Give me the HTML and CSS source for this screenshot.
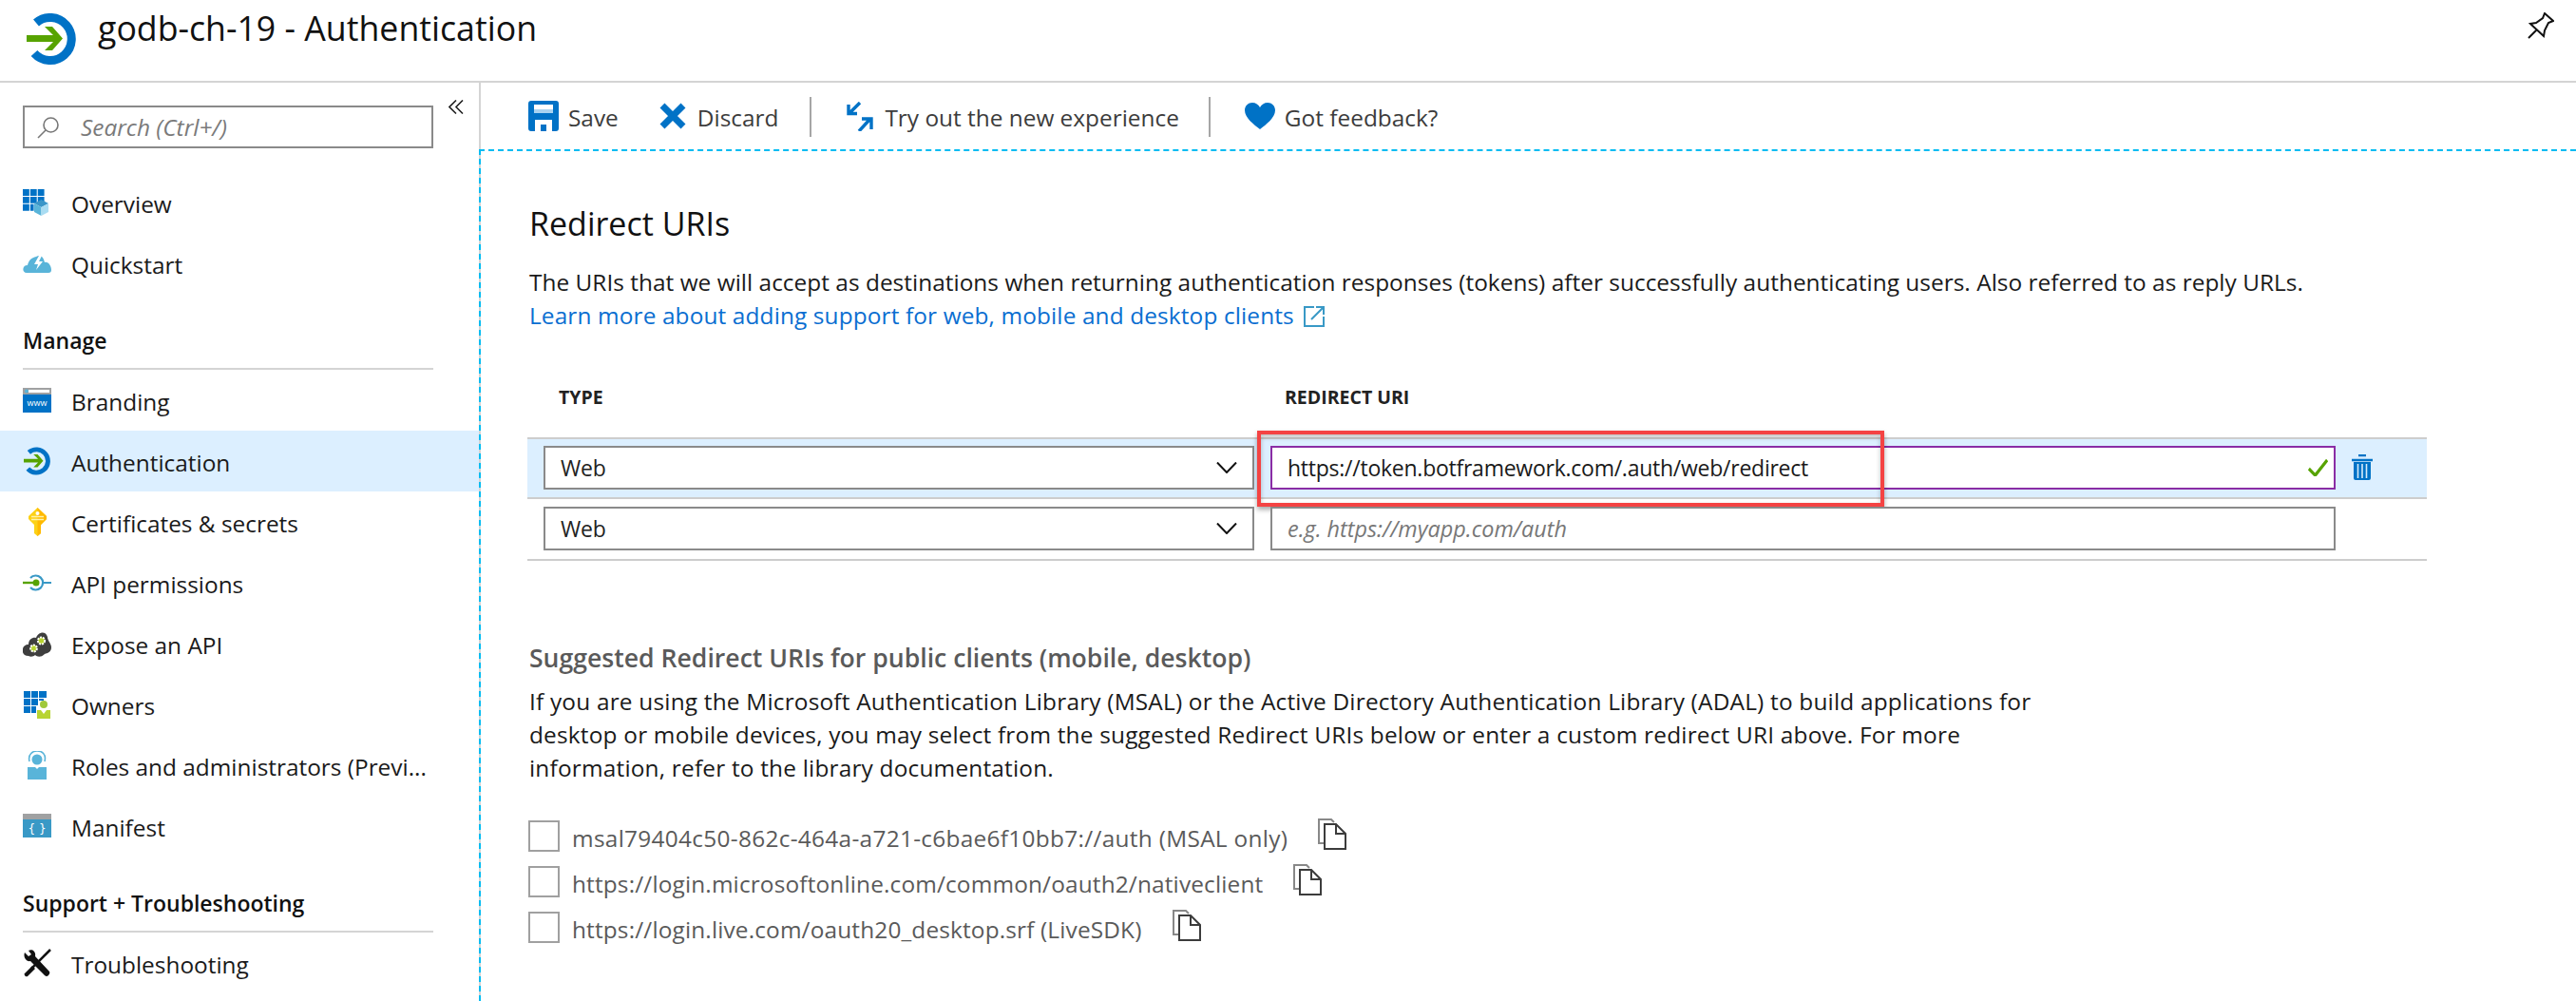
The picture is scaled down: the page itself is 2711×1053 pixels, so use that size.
FILE: index.html
```html
<!DOCTYPE html>
<html lang="en">
<head>
    <meta charset="UTF-8">
    <title>godb-ch-19 - Authentication</title>
    <link rel="stylesheet" href="styles.css">
</head>
<body>
    <svg class="defs" width="0" height="0">
        <symbol id="auth-logo" viewBox="0 0 52 54">
            <path d="M10 10 A22.5 22.5 0 1 1 8 42" fill="none" stroke="#0072c6" stroke-width="9"/>
            <path d="M19 14 H27 L38 26.5 L27 39 H19 L28 30 H0 V23 H28 Z" fill="#57a300"/>
        </symbol>
        <symbol id="copy" viewBox="0 0 30 33">
            <path d="M6 26 H1 V1 H14 L17 4" fill="none" stroke="#888" stroke-width="2"/>
            <path d="M7 6 H19 L29 16 V32 H7 Z M19 6 V16 H29" fill="#fff" stroke="#3c3c3c" stroke-width="2"/>
        </symbol>
        <symbol id="chev" viewBox="0 0 22 12">
            <path d="M1 0.5 L11 11 L21 0.5" fill="none" stroke="#111" stroke-width="2"/>
        </symbol>
    </svg>

    <header class="blade-header">
        <svg class="logo" width="52" height="54"><use href="#auth-logo"/></svg>
        <h1>godb-ch-19 - Authentication</h1>
        <svg class="pin" width="28" height="28" viewBox="0 0 28 28">
            <path d="M1 27 L10 18 M18 1 L27 9 L22 11 L18 19 L17 25 L3 12 L9 11 L16 6 Z M3 12 L17 25" fill="none" stroke="#111" stroke-width="2"/>
        </svg>
    </header>

    <div class="blade-body">
        <aside class="sidebar">
            <div class="search-row">
                <div class="search">
                    <svg width="24" height="24" viewBox="0 0 24 24">
                        <circle cx="14.5" cy="9.5" r="7.5" fill="none" stroke="#777" stroke-width="1.6"/>
                        <path d="M9 15 L1 23" stroke="#777" stroke-width="1.6"/>
                    </svg>
                    <span>Search (Ctrl+/)</span>
                </div>
                <svg class="collapse" width="16" height="15" viewBox="0 0 16 15">
                    <path d="M8 0.5 L1 7.5 L8 14.5 M15 0.5 L8 7.5 L15 14.5" fill="none" stroke="#222" stroke-width="1.6"/>
                </svg>
            </div>

            <nav class="nav-first">
                <a class="nav-item">
                    <svg width="30" height="30" viewBox="0 0 30 30">
                        <path d="M0 1h6.5v6.5H0zM7.5 1H14v6.5H7.5zM15 1h6.5v6.5H15zM0 8.5h6.5V15H0zM7.5 8.5H14V15H7.5zM15 8.5h6.5V15H15zM0 16h6.5v6.5H0zM7.5 16H11v6.5H7.5z" fill="#0072c6" transform="translate(0 0) scale(1.05)"/>
                        <path d="M12 16 L19.5 12 L27 16 L19.5 20 Z" fill="#3a96c8"/>
                        <path d="M12 16 L19.5 20 V29 L12 25 Z" fill="#59b4d9"/>
                        <path d="M27 16 L19.5 20 V29 L27 25 Z" fill="#a9dcf2"/>
                    </svg>
                    <span>Overview</span>
                </a>
                <a class="nav-item">
                    <svg width="30" height="30" viewBox="0 0 30 30">
                        <path d="M4 25 C-1 25 -1 17 5 17 C6 12 9 9 14 8 C19 5 22 9 23 14 C27 13 30 18 30 22 C30 24 29 25 27 25 Z" fill="#59b4d9"/>
                        <path d="M17 7 L12 16 H16 L14 22 L21 13 H17 L20 7 Z" fill="#fff"/>
                    </svg>
                    <span>Quickstart</span>
                </a>
            </nav>

            <h2 class="nav-heading">Manage</h2>
            <nav>
                <a class="nav-item">
                    <svg width="30" height="30" viewBox="0 0 30 30">
                        <rect y="2" width="30" height="26" fill="#0072c6"/>
                        <rect y="2" width="30" height="7" fill="#a0a1a2"/>
                        <rect x="6" y="4" width="22" height="3" fill="#fff"/>
                        <circle cx="4" cy="5.5" r="2" fill="#59b4d9"/>
                        <text x="15" y="21" class="www">www</text>
                    </svg>
                    <span>Branding</span>
                </a>
                <a class="nav-item active">
                    <svg width="30" height="30" viewBox="0 0 30 30"><use href="#auth-logo" x="1" y="0" width="28" height="30"/></svg>
                    <span>Authentication</span>
                </a>
                <a class="nav-item">
                    <svg width="30" height="30" viewBox="0 0 30 30">
                        <path d="M15.5 0 L25 9 V12 L19 18 V27 L15.5 30 L12 27 V18 L6 12 V9 Z" fill="#fcd116"/>
                        <path d="M15.5 0 L25 9 V12 L19 18 V27 L15.5 30 Z" fill="#ffb900"/>
                        <circle cx="15.5" cy="6" r="2" fill="#fff"/>
                        <path d="M9 9.5h13M9 12.5h13" stroke="#fff3a8" stroke-width="1.5"/>
                    </svg>
                    <span>Certificates &amp; secrets</span>
                </a>
                <a class="nav-item">
                    <svg width="30" height="30" viewBox="0 0 30 30">
                        <path d="M8 10 A7.5 7.5 0 1 1 8 20 M22 15 H30" fill="none" stroke="#3999c6" stroke-width="2.2"/>
                        <path d="M0 15 H14" stroke="#57a300" stroke-width="2.4"/>
                        <circle cx="14" cy="15" r="3.5" fill="#57a300"/>
                    </svg>
                    <span>API permissions</span>
                </a>
                <a class="nav-item">
                    <svg width="30" height="30" viewBox="0 0 30 30">
                        <path d="M6 28 C1 28 -1 24 0 21 C0 18 3 16 6 16 C6 10 11 8 14 9 C16 3 24 1 26 8 C26 12 30 15 30 19 C30 24 26 25 23 26 C19 30 15 29 13 27 C11 29 8 29 6 28 Z" fill="#3e3e3e"/>
                        <circle cx="19.5" cy="12" r="3.6" fill="#b8d432" stroke="#fff" stroke-width="2" stroke-dasharray="2 1"/>
                        <circle cx="11.5" cy="20" r="3.4" fill="#b8d432" stroke="#fff" stroke-width="2" stroke-dasharray="2 1"/>
                    </svg>
                    <span>Expose an API</span>
                </a>
                <a class="nav-item">
                    <svg width="30" height="30" viewBox="0 0 30 30">
                        <path d="M1 1h7v7H1zM9 1h7v7H9zM17 1h8v7h-8zM1 9h7v7H1zM9 9h7v7H9zM17 9h5v2h-5zM1 17h7v7H1zM9 17h5v7H9z" fill="#0072c6"/>
                        <circle cx="22" cy="15" r="4" fill="#9fc93c"/>
                        <path d="M15 21 H29 V30 H15 Z" fill="#b8d432"/>
                        <path d="M19 21 L22 25 L25 21 Z" fill="#fff"/>
                    </svg>
                    <span>Owners</span>
                </a>
                <a class="nav-item">
                    <svg width="30" height="30" viewBox="0 0 30 30">
                        <path d="M7 17 H13 L15 19 L17 17 H25 V30 H5 V17 Z" fill="#59b4d9"/>
                        <circle cx="15" cy="9" r="5.5" fill="#59b4d9"/>
                        <path d="M7 11 C5 3 11 0 15 0 C20 0 25 3 23 11" fill="none" stroke="#59b4d9" stroke-width="1.6"/>
                    </svg>
                    <span>Roles and administrators (Previ...</span>
                </a>
                <a class="nav-item">
                    <svg width="30" height="30" viewBox="0 0 30 30">
                        <rect y="2" width="30" height="25" fill="#3999c6"/>
                        <rect y="2" width="30" height="6" fill="#a0a1a2"/>
                        <text x="15" y="22" class="braces">{ }</text>
                    </svg>
                    <span>Manifest</span>
                </a>
            </nav>

            <h2 class="nav-heading">Support + Troubleshooting</h2>
            <nav>
                <a class="nav-item">
                    <svg width="30" height="30" viewBox="0 0 30 30">
                        <path d="M29 1 L9 21" stroke="#111" stroke-width="2.5"/>
                        <path d="M10 18 L13 21 L5 29 Q3 30 2 28 Q1 26 2 26 Z" fill="#111"/>
                        <path d="M2 4 L6 8 L9 6 L6 2 C10 0 14 3 13 8 L28 24 Q29 26 27 28 Q25 30 23 28 L8 13 C4 14 0 9 2 4 Z" fill="#111"/>
                    </svg>
                    <span>Troubleshooting</span>
                </a>
            </nav>
        </aside>

        <main class="main">
            <div class="toolbar">
                <a class="tool tool-save">
                    <svg width="32" height="32" viewBox="0 0 32 32">
                        <path fill-rule="evenodd" d="M3 0 H29 Q32 0 32 3 V29 Q32 32 29 32 H3 Q0 32 0 29 V3 Q0 0 3 0 Z M6 4 V13 H26 V4 Z M7 20 V32 H25 V20 Z" fill="#0072c6"/>
                        <rect x="7" y="20" width="18" height="12" fill="#fff"/>
                        <rect x="13" y="25" width="6" height="7" fill="#0072c6"/>
                        <rect x="6" y="9" width="20" height="4" fill="#a9d3f0"/>
                    </svg>
                    <span>Save</span>
                </a>
                <a class="tool tool-discard">
                    <svg width="28" height="28" viewBox="0 0 28 28">
                        <path d="M3 3 L25 25 M25 3 L3 25" stroke="#0072c6" stroke-width="7"/>
                    </svg>
                    <span>Discard</span>
                </a>
                <i class="sep"></i>
                <a class="tool">
                    <svg width="28" height="31" viewBox="0 0 28 31">
                        <path d="M13 1 L3 11 M1 3 V12.5 H10" fill="none" stroke="#0072c6" stroke-width="3.4" transform="translate(1 0)"/>
                        <path d="M14 31 L25 19 M27 29 V18 H17" fill="none" stroke="#0072c6" stroke-width="3.4" transform="translate(-1 0)"/>
                    </svg>
                    <span>Try out the new experience</span>
                </a>
                <i class="sep sep-last"></i>
                <a class="tool tool-feedback">
                    <svg width="32" height="28" viewBox="0 0 33 28" preserveAspectRatio="none">
                        <path d="M16.5 28 C10 23 0 16 0 8 C0 3 4 0 8 0 C12 0 15 2 16.5 5 C18 2 21 0 25 0 C29 0 33 3 33 8 C33 16 23 23 16.5 28 Z" fill="#0072c6"/>
                    </svg>
                    <span>Got feedback?</span>
                </a>
            </div>

            <section class="content">
                <h2 class="page-title">Redirect URIs</h2>
                <p class="text">The URIs that we will accept as destinations when returning authentication responses (tokens) after successfully authenticating users. Also referred to as reply URLs.<br>
                    <a class="link">Learn more about adding support for web, mobile and desktop clients
                        <svg width="22" height="22" viewBox="0 0 22 22">
                            <path d="M11 1 H1 V21 H21 V11 M8 14 L21 1 M13 1 H21 V9" fill="none" stroke="#3999c6" stroke-width="2"/>
                        </svg>
                    </a>
                </p>

                <div class="table-head">
                    <span class="col-type">TYPE</span>
                    <span>REDIRECT URI</span>
                </div>
                <div class="uri-table">
                    <div class="uri-row selected">
                        <div class="select">Web<svg width="22" height="12"><use href="#chev"/></svg></div>
                        <div class="input focused">https://token.botframework.com/.auth/web/redirect
                            <svg width="21" height="18" viewBox="0 0 25 18" preserveAspectRatio="none">
                                <path d="M1 10 L9 17 L24 1" fill="none" stroke="#57a300" stroke-width="3.6"/>
                            </svg>
                        </div>
                        <svg class="trash" width="22" height="27" viewBox="0 0 22 27">
                            <path d="M7 1 H15 M0 6 H22" stroke="#0072c6" stroke-width="2.4"/>
                            <path d="M2 8 H20 V25 Q20 27 18 27 H4 Q2 27 2 25 Z" fill="#0072c6"/>
                            <path d="M6.5 10 V25 M11 10 V25 M15.5 10 V25" stroke="#d6ebfb" stroke-width="1.6"/>
                        </svg>
                        <div class="callout"></div>
                    </div>
                    <div class="uri-row">
                        <div class="select">Web<svg width="22" height="12"><use href="#chev"/></svg></div>
                        <div class="input placeholder">e.g. https://myapp.com/auth</div>
                    </div>
                </div>

                <h3 class="sub-title">Suggested Redirect URIs for public clients (mobile, desktop)</h3>
                <p class="text narrow">If you are using the Microsoft Authentication Library (MSAL) or the Active Directory Authentication Library (ADAL) to build applications for desktop or mobile devices, you may select from the suggested Redirect URIs below or enter a custom redirect URI above. For more information, refer to the library documentation.</p>

                <ul class="suggested">
                    <li><i class="box"></i><span>msal79404c50-862c-464a-a721-c6bae6f10bb7://auth (MSAL only)</span><svg width="30" height="33"><use href="#copy"/></svg></li>
                    <li><i class="box"></i><span>https://login.microsoftonline.com/common/oauth2/nativeclient</span><svg width="30" height="33"><use href="#copy"/></svg></li>
                    <li><i class="box"></i><span>https://login.live.com/oauth20_desktop.srf (LiveSDK)</span><svg width="30" height="33"><use href="#copy"/></svg></li>
                </ul>
            </section>
        </main>
    </div>
</body>
</html>
```

FILE: styles.css
```css
* {
    box-sizing: border-box;
}

html, body {
    height: 100%;
}

body {
    margin: 0;
    background: #fff;
    color: #1a1a1a;
    font-family: "Open Sans", sans-serif;
    font-size: 24.4px;
    overflow: hidden;
}

.defs {
    position: absolute;
}

/* top bar */
.blade-header {
    display: flex;
    align-items: flex-start;
    height: 87px;
    padding: 14px 23px 0 28px;
    border-bottom: 2px solid #d4d4d4;
}

.blade-header h1 {
    margin: -8px 0 0 23px;
    font-size: 35.7px;
    line-height: 46px;
    font-weight: 500;
    color: #111;
}

.pin {
    margin: -1px 0 0 auto;
}

.blade-body {
    display: flex;
    height: 966px;
}

/* left menu */
.sidebar {
    width: 506px;
    flex: none;
    border-right: 2px solid #d4d4d4;
}

.search-row {
    display: flex;
    align-items: flex-start;
    padding: 24px 0 0 24px;
}

.search {
    display: flex;
    align-items: center;
    gap: 22px;
    width: 432px;
    height: 45px;
    padding-left: 13px;
    border: 2px solid #8a8a8a;
    color: #7a7a7a;
    font-style: italic;
}

.collapse {
    margin: -6px 0 0 16px;
}

.nav-first {
    margin-top: 25px;
}

.nav-item {
    display: flex;
    align-items: center;
    gap: 21px;
    height: 64px;
    padding-left: 24px;
    white-space: nowrap;
}

.nav-item span {
    padding-top: 3px;
}

.nav-item.active {
    background: #dcefff;
}

.nav-heading {
    height: 80px;
    margin: 0 48px 0 24px;
    padding-top: 32px;
    border-bottom: 2px solid #d4d4d4;
    font-size: 23px;
    line-height: 34px;
    font-weight: 600;
    color: #111;
}

.www {
    font-size: 9px;
    fill: #fff;
    text-anchor: middle;
}

.braces {
    font-size: 12px;
    font-family: "DejaVu Sans", sans-serif;
    fill: #fff;
    text-anchor: middle;
}

/* main pane */
.main {
    flex: 1;
    min-width: 0;
}

.toolbar {
    display: flex;
    align-items: center;
    height: 70px;
    padding-left: 50px;
    color: #3c3c3c;
}

.tool {
    display: flex;
    align-items: center;
    gap: 12px;
    white-space: nowrap;
}

.tool-save {
    gap: 10px;
}

.tool-feedback {
    gap: 10px;
}

.tool span {
    padding-top: 3px;
}

.tool-discard {
    margin-left: 43px;
}

.sep {
    width: 2px;
    height: 42px;
    margin: 1px 37px 0 33px;
    background: #a6a6a6;
}

.sep-last {
    margin: 1px 36px 0 31px;
}

.content {
    height: 896px;
    margin-left: -2px;
    padding: 52px 0 0 51px;
    border-top: 2px dashed #00bcf2;
    border-left: 2px dashed #00bcf2;
}

.page-title {
    margin: 0 0 20px;
    font-size: 34px;
    line-height: 48px;
    font-weight: 400;
    color: #111;
}

.text {
    margin: 0;
    line-height: 35px;
    letter-spacing: 0.03px;
}

.narrow {
    width: 1600px;
    margin-top: 10px;
    letter-spacing: 0.2px;
}

.link {
    color: #0a6ed1;
    letter-spacing: 0.13px;
}

.link svg {
    vertical-align: -3px;
    margin-left: 4px;
}

.table-head {
    display: flex;
    height: 34px;
    margin-top: 52px;
    margin-bottom: 25px;
    font-size: 19.5px;
    line-height: 34px;
    font-weight: 700;
    color: #222;
}

.col-type {
    width: 795px;
    padding-left: 31px;
}

.uri-table {
    width: 1999px;
    margin-left: -2px;
}

.uri-row {
    position: relative;
    display: flex;
    padding: 8px 0 9px 17px;
    border-bottom: 2px solid #cdcdcd;
}

.uri-row.selected {
    padding: 7px 0 8px 17px;
    border-top: 2px solid #cdcdcd;
    background: #dcefff;
}

.select, .input {
    display: flex;
    align-items: center;
    justify-content: space-between;
    height: 46px;
    border: 2px solid #8a8a8a;
    background: #fff;
    font-size: 23px;
    letter-spacing: -0.25px;
    white-space: nowrap;
}

.select {
    width: 748px;
    padding: 0 16px 0 16px;
    margin-right: 17px;
    color: #222;
}

.input {
    width: 1121px;
    padding: 0 6px 0 16px;
}

.input.focused {
    border-color: #8a2da5;
}

.input.placeholder {
    color: #777;
    font-style: italic;
    font-size: 23.4px;
    letter-spacing: 0;
}

.trash {
    margin: 9px 0 0 17px;
}

/* annotation drawn over the first row */
.callout {
    position: absolute;
    left: 768px;
    top: -9px;
    width: 660px;
    height: 80px;
    border: 4px solid #f44343;
    box-shadow: 0 3px 5px rgba(0, 0, 0, 0.35), inset 0 3px 5px rgba(0, 0, 0, 0.25);
}

.sub-title {
    margin: 84px 0 0;
    font-size: 26.6px;
    line-height: 36px;
    font-weight: 600;
    color: #5a5a5a;
}

.suggested {
    margin: 30px 0 0 -1px;
    padding: 0;
    list-style: none;
    color: #5a5a5a;
    letter-spacing: 0.15px;
}

.suggested li {
    display: flex;
    align-items: center;
    height: 48px;
}

.suggested li:first-child {
    letter-spacing: 0.3px;
}

.suggested span {
    margin-left: 13px;
    padding-top: 5px;
}

.suggested svg {
    margin: -4px 0 0 32px;
}

.box {
    width: 33px;
    height: 33px;
    border: 2px solid #a0a0a0;
}
```
